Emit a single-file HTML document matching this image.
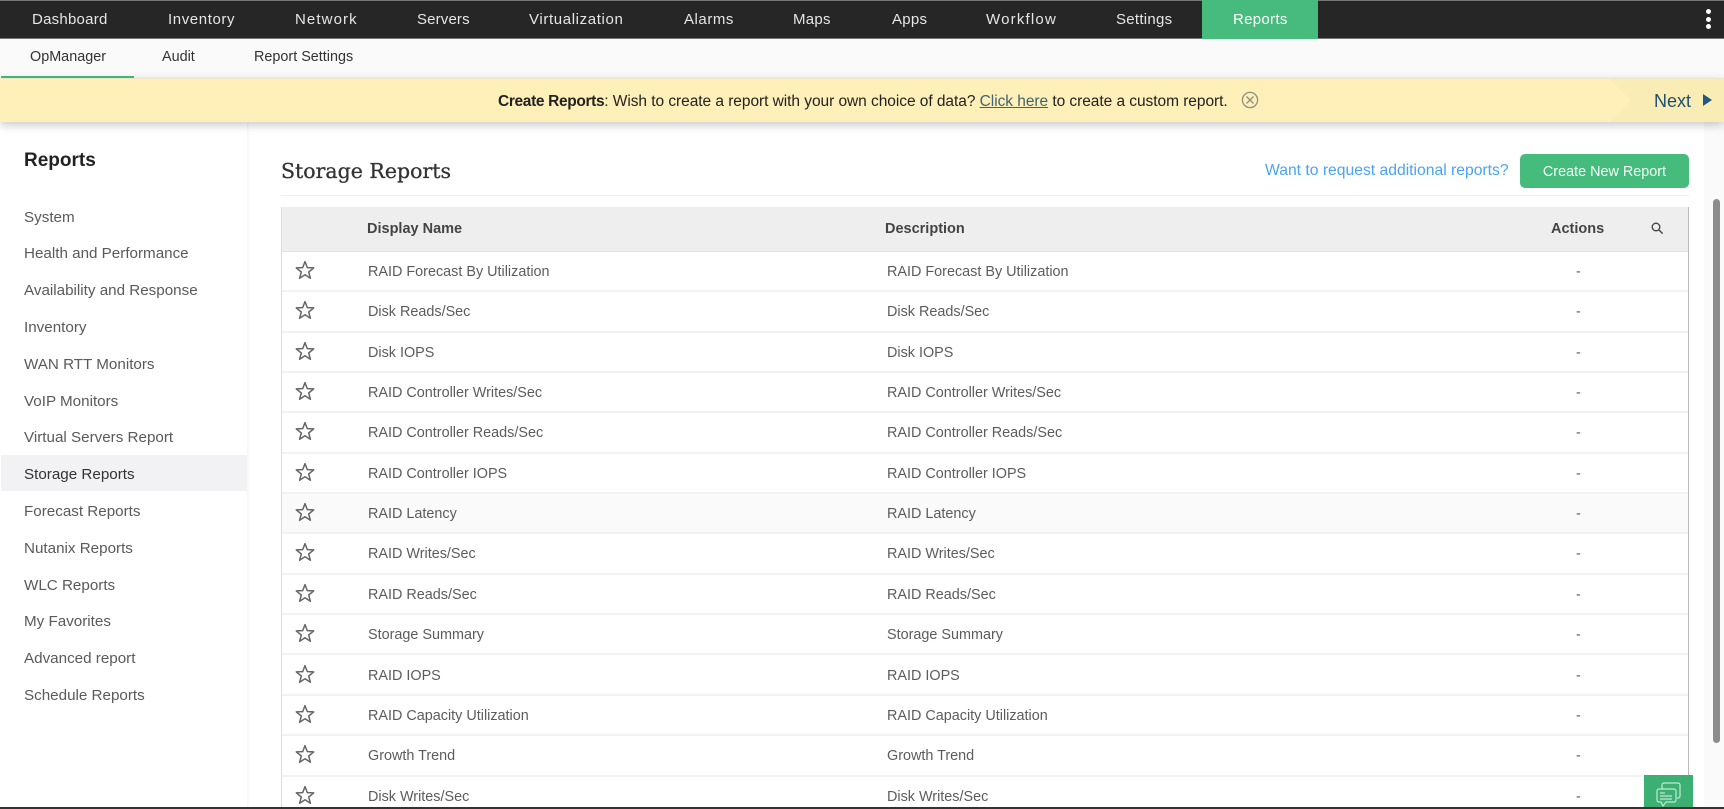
<!DOCTYPE html>
<html><head><meta charset="utf-8"><title>Storage Reports</title>
<style>
html,body{margin:0;padding:0;width:1724px;height:809px;overflow:hidden;background:#fff}
body{position:relative;font-family:"Liberation Sans",sans-serif;color:#555}
.a{position:absolute;white-space:nowrap}
#nav{position:absolute;left:0;top:0;width:1724px;height:39px;background:#262626;border-top:1px solid #777;border-bottom:1px solid #777;box-sizing:border-box}
.n{position:absolute;top:9px;line-height:21px;font-size:15px;color:#e6e6e6;white-space:nowrap}
#tab{position:absolute;left:1202px;top:0;width:116px;height:39px;background:#47bb7d}
.d{position:absolute;left:1706px;width:5px;height:5px;border-radius:50%;background:#fff}
#sub{position:absolute;left:0;top:39px;width:1724px;height:39px;background:#fafafa}
.s{position:absolute;top:8px;line-height:20px;font-size:14.4px;color:#333;white-space:nowrap}
#ul{position:absolute;left:1px;top:76px;width:133px;height:2px;background:#47bb7d}
#ban{position:absolute;left:0;top:78px;width:1724px;height:44px;background:#f9edb5;border-top:1px solid #eee6c8;box-sizing:border-box;box-shadow:0 3px 9px rgba(0,0,0,.22);z-index:2}
#sidebar{position:absolute;left:0;top:122px;width:247px;height:687px;background:#fff;box-shadow:1px 0 3px rgba(0,0,0,.05)}
.m{position:absolute;left:24px;font-size:15.2px;line-height:20px;color:#5a5a5a;white-space:nowrap}
#sel{position:absolute;left:1px;top:455px;width:246px;height:36px;background:#f2f2f4}
#tbl{position:absolute;left:281px;top:207px;width:1408px;height:602px;border-left:1px solid #ddd;border-right:1px solid #bbb;box-sizing:border-box;overflow:hidden}
#hd{position:absolute;left:0;top:0;width:1406px;height:45px;background:#eee;border-bottom:1px solid #e3e3e3;box-sizing:border-box}
.h{position:absolute;top:12px;line-height:20px;font-size:14.5px;font-weight:bold;color:#444;white-space:nowrap}
#rows{position:absolute;left:0;top:1px;width:1406px;height:601px}
.r{position:absolute;left:0;width:1406px;height:40.35px;border-bottom:2px solid #f2f2f2;box-sizing:border-box;font-size:14.4px;line-height:20px;color:#5c5c5c}
.r span{position:absolute;top:10px;white-space:nowrap}
.r span:nth-of-type(1){left:86px}
.r span:nth-of-type(2){left:605px}
.r span:nth-of-type(3){left:1294px}
.r svg{position:absolute;left:13px;top:8px}
#st{position:absolute;left:1704px;top:122px;width:20px;height:687px;background:#fafafa}
#sb{position:absolute;left:1713px;top:199px;width:7px;height:544px;border-radius:4px;background:#8c8c8c}
#bot{position:absolute;left:0;top:807px;width:1724px;height:2px;background:#333}
#chat{position:absolute;left:1644px;top:775px;width:49px;height:32px;background:#3cb073;overflow:hidden}
</style></head><body>
<div id="nav"></div>
<div id="tab"></div>
<div class="n" style="left:32px;letter-spacing:.24px">Dashboard</div>
<div class="n" style="left:168px;letter-spacing:.6px">Inventory</div>
<div class="n" style="left:295px;letter-spacing:1.1px">Network</div>
<div class="n" style="left:417px;letter-spacing:.15px">Servers</div>
<div class="n" style="left:529px;letter-spacing:.63px">Virtualization</div>
<div class="n" style="left:684px;letter-spacing:.55px">Alarms</div>
<div class="n" style="left:793px;letter-spacing:.27px">Maps</div>
<div class="n" style="left:892px;letter-spacing:.27px">Apps</div>
<div class="n" style="left:986px;letter-spacing:1.2px">Workflow</div>
<div class="n" style="left:1116px;letter-spacing:.27px">Settings</div>
<div class="n" style="left:1233px;color:#fff;letter-spacing:.3px">Reports</div>
<div class="d" style="top:9px"></div><div class="d" style="top:17px"></div><div class="d" style="top:24px"></div>
<div id="sub">
<div class="s" style="left:30px">OpManager</div>
<div class="s" style="left:162px">Audit</div>
<div class="s" style="left:254px">Report Settings</div>
</div>
<div id="ul"></div>
<div id="ban">
<svg class="a" style="left:0;top:0" width="1724" height="43"><polygon points="0,0 1610,0 1631,21 1610,43 0,43" fill="#fff0b9"/></svg>
<div class="a" style="left:498px;top:13px;line-height:20px;font-size:15.5px;color:#222;letter-spacing:-.05px"><b style="letter-spacing:-.35px">Create Reports</b>: Wish to create a report with your own choice of data? <u style="color:#3d6470">Click here</u> to create a custom report.</div>
<svg class="a" style="left:1241px;top:12px" width="18" height="18" viewBox="0 0 18 18" fill="none" stroke="#8f8f7f" stroke-width="1.3"><circle cx="9" cy="9" r="7.6"/><path d="M5.5 5.5l7 7M12.5 5.5l-7 7"/></svg>
<div class="a" style="left:1654px;top:11px;line-height:22px;font-size:18px;color:#1f4f70">Next</div>
<svg class="a" style="left:1702px;top:15px" width="11" height="12"><polygon points="1,0 10,6 1,12" fill="#1f5a85"/></svg>
</div>
<div id="sidebar"></div>
<div id="sel"></div>
<div class="a" style="left:24px;top:149px;line-height:24px;font-size:19px;font-weight:bold;color:#222">Reports</div>
<div class="m" style="top:207.5px">System</div>
<div class="m" style="top:244.3px">Health and Performance</div>
<div class="m" style="top:281.1px">Availability and Response</div>
<div class="m" style="top:317.9px">Inventory</div>
<div class="m" style="top:354.7px">WAN RTT Monitors</div>
<div class="m" style="top:391.5px">VoIP Monitors</div>
<div class="m" style="top:428.3px">Virtual Servers Report</div>
<div class="m" style="top:465.1px;color:#333">Storage Reports</div>
<div class="m" style="top:501.9px">Forecast Reports</div>
<div class="m" style="top:538.7px">Nutanix Reports</div>
<div class="m" style="top:575.5px">WLC Reports</div>
<div class="m" style="top:612.3px">My Favorites</div>
<div class="m" style="top:649.1px">Advanced report</div>
<div class="m" style="top:685.9px">Schedule Reports</div>
<div class="a" style="left:281px;top:157.5px;line-height:26px;font-size:20.5px;font-family:'DejaVu Serif',serif;color:#333;-webkit-text-stroke:.3px #333">Storage Reports</div>
<div class="a" style="left:1265px;top:161px;line-height:20px;font-size:15.7px;color:#4aa3f5">Want to request additional reports?</div>
<div class="a" style="left:1520px;top:154px;width:169px;height:34px;line-height:36px;border-radius:5px;background:#45bb7c;color:#f4fff8;text-align:center;font-size:14.4px">Create New Report</div>
<div class="a" style="left:281px;top:195px;width:1408px;height:1px;background:#eee"></div>
<svg width="0" height="0" style="position:absolute"><defs><polygon id="star" points="10,1.6 12.3,7.6 18.7,7.9 13.7,12 15.4,18.3 10,14.8 4.6,18.3 6.3,12 1.3,7.9 7.7,7.6" fill="none" stroke="#666" stroke-width="1.5" stroke-linejoin="round"/></defs></svg>
<div id="tbl">
<div id="hd">
<div class="h" style="left:85px">Display Name</div>
<div class="h" style="left:603px">Description</div>
<div class="h" style="left:1269px">Actions</div>
<svg class="a" style="left:1368px;top:14px" width="14" height="14" viewBox="0 0 14 14" fill="none" stroke="#444" stroke-width="1.4"><circle cx="6" cy="6" r="3.8"/><path d="M9 9l3.6 3.6"/></svg>
</div>
<div id="rows">
<div class="r" style="top:44px"><svg width="20" height="20"><use href="#star"/></svg><span>RAID Forecast By Utilization</span><span>RAID Forecast By Utilization</span><span>-</span></div>
<div class="r" style="top:84.35px"><svg width="20" height="20"><use href="#star"/></svg><span>Disk Reads/Sec</span><span>Disk Reads/Sec</span><span>-</span></div>
<div class="r" style="top:124.7px"><svg width="20" height="20"><use href="#star"/></svg><span>Disk IOPS</span><span>Disk IOPS</span><span>-</span></div>
<div class="r" style="top:165.05px"><svg width="20" height="20"><use href="#star"/></svg><span>RAID Controller Writes/Sec</span><span>RAID Controller Writes/Sec</span><span>-</span></div>
<div class="r" style="top:205.4px"><svg width="20" height="20"><use href="#star"/></svg><span>RAID Controller Reads/Sec</span><span>RAID Controller Reads/Sec</span><span>-</span></div>
<div class="r" style="top:245.75px"><svg width="20" height="20"><use href="#star"/></svg><span>RAID Controller IOPS</span><span>RAID Controller IOPS</span><span>-</span></div>
<div class="r" style="top:286.1px;background:#fafafa"><svg width="20" height="20"><use href="#star"/></svg><span>RAID Latency</span><span>RAID Latency</span><span>-</span></div>
<div class="r" style="top:326.45px"><svg width="20" height="20"><use href="#star"/></svg><span>RAID Writes/Sec</span><span>RAID Writes/Sec</span><span>-</span></div>
<div class="r" style="top:366.8px"><svg width="20" height="20"><use href="#star"/></svg><span>RAID Reads/Sec</span><span>RAID Reads/Sec</span><span>-</span></div>
<div class="r" style="top:407.15px"><svg width="20" height="20"><use href="#star"/></svg><span>Storage Summary</span><span>Storage Summary</span><span>-</span></div>
<div class="r" style="top:447.5px"><svg width="20" height="20"><use href="#star"/></svg><span>RAID IOPS</span><span>RAID IOPS</span><span>-</span></div>
<div class="r" style="top:487.85px"><svg width="20" height="20"><use href="#star"/></svg><span>RAID Capacity Utilization</span><span>RAID Capacity Utilization</span><span>-</span></div>
<div class="r" style="top:528.2px"><svg width="20" height="20"><use href="#star"/></svg><span>Growth Trend</span><span>Growth Trend</span><span>-</span></div>
<div class="r" style="top:568.55px"><svg width="20" height="20"><use href="#star"/></svg><span>Disk Writes/Sec</span><span>Disk Writes/Sec</span><span>-</span></div>
</div>
</div>
<div id="st"></div><div id="sb"></div>
<div id="chat"><svg width="49" height="32" viewBox="0 0 49 32" fill="none" stroke="#c4e8d4" stroke-width="1.2"><g transform="translate(0,6)"><path d="M18 8V4a2 2 0 0 1 2-2h14a2 2 0 0 1 2 2v11a2 2 0 0 1-2 2h-1"/><path d="M15 8h15a2 2 0 0 1 2 2v9a2 2 0 0 1-2 2H22l-3 4-2-4h-2a2 2 0 0 1-2-2v-9a2 2 0 0 1 2-2z"/><path d="M16 12h5M16 15h12M16 18h12"/></g></svg></div>
<div id="bot"></div>
</body></html>
